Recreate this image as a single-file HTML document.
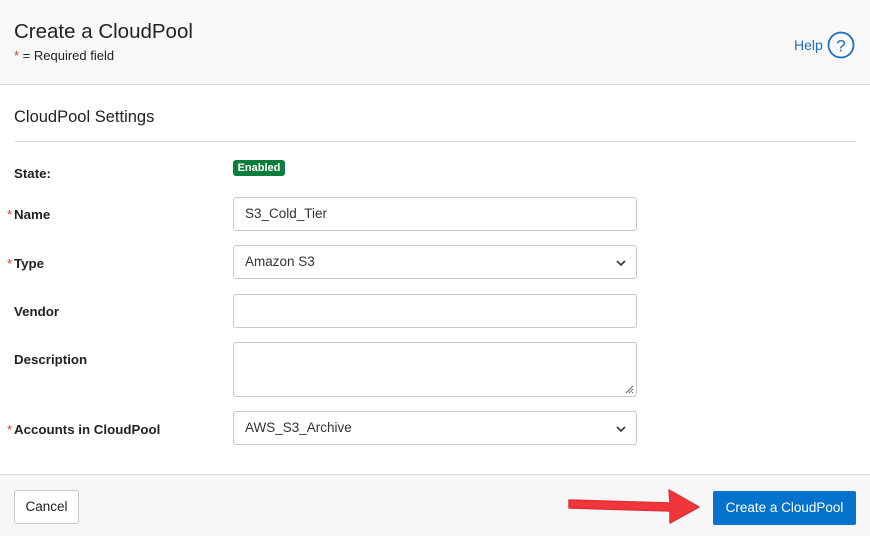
<!DOCTYPE html>
<html><head><style>
*{margin:0;padding:0;box-sizing:border-box}
body{width:870px;height:536px;background:#fff;font-family:"Liberation Sans",sans-serif;color:#1f1f1f;position:relative;overflow:hidden;font-size:14px}
.hdr{position:absolute;left:0;top:0;width:870px;height:85px;background:#f8f8f8;border-bottom:1px solid #dcdcdf}
.abs{position:absolute}
.lbl{position:absolute;left:14px;font-weight:bold;font-size:13.3px;color:#222}
.req{color:#d2401e;font-weight:normal;position:absolute;left:-7px}
.inp{position:absolute;left:233px;width:404px;height:34px;border:1px solid #c8c8c8;border-radius:3px;background:#fff;font-size:13.5px;padding:8px 11px;color:#333}
.chev{position:absolute;right:9px;top:11px}
.ftr{position:absolute;left:0;top:474px;width:870px;height:62px;background:#f7f7f8;border-top:1px solid #dcdcdf}
</style></head><body>
<div class="hdr">
<div class="abs" style="left:14px;top:20px;font-size:20.5px;color:#222">Create a CloudPool</div>
<div class="abs" style="left:14px;top:48px;font-size:13px;color:#222"><span style="color:#d2401e">*</span> = Required field</div>
<div class="abs" style="left:794px;top:37px;font-size:14px;color:#1a6fc7">Help</div>
<svg class="abs" style="left:827px;top:31px" width="28" height="28" viewBox="0 0 28 28"><circle cx="14" cy="14" r="12.5" fill="none" stroke="#1a6fc7" stroke-width="1.8"/><text x="14" y="20.5" text-anchor="middle" font-family="Liberation Sans" font-size="17" fill="#1a6fc7">?</text></svg>
</div>
<div class="abs" style="left:14px;top:108px;font-size:16.5px;color:#222">CloudPool Settings</div>
<div class="abs" style="left:14px;top:141px;width:842px;height:1px;background:#dcdcdf"></div>
<div class="lbl" style="top:166px">State:</div>
<div class="abs" style="left:233px;top:160px;width:52px;height:16px;background:#0c7d3c;border-radius:3px;color:#fff;font-size:11px;font-weight:bold;text-align:center;line-height:16px">Enabled</div>
<div class="lbl" style="top:207px"><span class="req">*</span>Name</div>
<div class="inp" style="top:197px">S3_Cold_Tier</div>
<div class="lbl" style="top:256px"><span class="req">*</span>Type</div>
<div class="inp" style="top:245px">Amazon S3<svg class="chev" width="12" height="12" viewBox="0 0 12 12"><path d="M2 4l4 4 4-4" fill="none" stroke="#333" stroke-width="1.6"/></svg></div>
<div class="lbl" style="top:304px">Vendor</div>
<div class="inp" style="top:294px"></div>
<div class="lbl" style="top:352px">Description</div>
<div class="inp" style="top:342px;height:55px"><svg style="position:absolute;right:2px;bottom:2px" width="10" height="10"><path d="M9 2L2 9M9 5L5 9M9 8L8 9" stroke="#666" stroke-width="1"/></svg></div>
<div class="lbl" style="top:422px"><span class="req">*</span>Accounts in CloudPool</div>
<div class="inp" style="top:411px">AWS_S3_Archive<svg class="chev" width="12" height="12" viewBox="0 0 12 12"><path d="M2 4l4 4 4-4" fill="none" stroke="#333" stroke-width="1.6"/></svg></div>
<div class="ftr">
<div class="abs" style="left:14px;top:15px;width:65px;height:34px;border:1px solid #c8c8c8;border-radius:3px;background:#fff;font-size:13.5px;text-align:center;line-height:32px;color:#222">Cancel</div>
<div class="abs" style="left:713px;top:16px;width:143px;height:34px;background:#0572ce;border-radius:2px;color:#fff;font-size:13.5px;text-align:center;line-height:34px">Create a CloudPool</div>
</div>
<svg class="abs" style="left:560px;top:485px" width="150" height="45" viewBox="0 0 150 45"><path d="M9 15 L110 18 L109 5 L139 22 L110 38 L110 26 L9 23 Z" fill="#f0353c" stroke="#e03036" stroke-width="1.5" stroke-linejoin="round"/></svg>
</body></html>
